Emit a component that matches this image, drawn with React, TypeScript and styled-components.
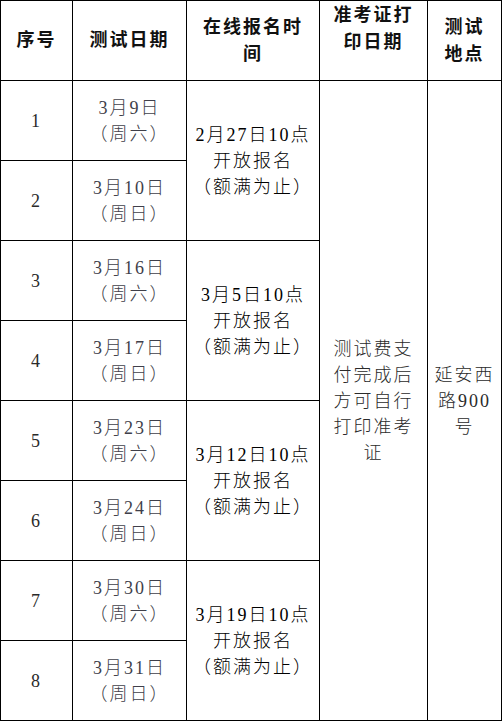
import styled, { createGlobalStyle } from 'styled-components';

const GlobalStyle = createGlobalStyle`
  html, body {
    margin: 0;
    padding: 0;
    background: #ffffff;
  }
`;

const Table = styled.table`
  border-collapse: collapse;
  table-layout: fixed;
  width: 501px;
  font-family: 'Liberation Serif', 'Noto Sans CJK SC', serif;
  font-size: 18px;
  letter-spacing: 2px;
  line-height: 26px;
  color: #222222;
`;

const Col = styled.col<{ $width: number }>`
  width: ${({ $width }) => $width}px;
`;

const HeaderCell = styled.th<{ $lift?: boolean }>`
  height: 80px;
  box-sizing: border-box;
  border: 1px solid #000000;
  padding: 0 4px ${({ $lift }) => ($lift ? '24px' : '0')};
  text-align: center;
  vertical-align: middle;
  font-weight: bold;
  line-height: 27px;
  color: #111111;
`;

const Cell = styled.td<{ $tone?: 'date' | 'dark' }>`
  height: 80px;
  box-sizing: border-box;
  border: 1px solid #000000;
  padding: 0 4px;
  text-align: center;
  vertical-align: middle;
  font-weight: 300;
  color: ${({ $tone }) =>
    $tone === 'date' ? '#3f3f4a' : $tone === 'dark' ? '#000000' : '#2a2a2a'};
`;

const rows = [
  { no: 1, day: '3月9日', week: '（周六）' },
  { no: 2, day: '3月10日', week: '（周日）' },
  { no: 3, day: '3月16日', week: '（周六）' },
  { no: 4, day: '3月17日', week: '（周日）' },
  { no: 5, day: '3月23日', week: '（周六）' },
  { no: 6, day: '3月24日', week: '（周日）' },
  { no: 7, day: '3月30日', week: '（周六）' },
  { no: 8, day: '3月31日', week: '（周日）' },
];

const signups = ['2月27日10点', '3月5日10点', '3月12日10点', '3月19日10点'];

export default function App() {
  return (
    <>
      <GlobalStyle />
      <Table>
        <colgroup>
          <Col $width={72} />
          <Col $width={114} />
          <Col $width={133} />
          <Col $width={108} />
          <Col $width={74} />
        </colgroup>
        <thead>
          <tr>
            <HeaderCell>序号</HeaderCell>
            <HeaderCell>测试日期</HeaderCell>
            <HeaderCell>
              在线报名时
              <br />间
            </HeaderCell>
            <HeaderCell $lift>
              准考证打
              <br />
              印日期
            </HeaderCell>
            <HeaderCell>
              测试
              <br />
              地点
            </HeaderCell>
          </tr>
        </thead>
        <tbody>
          {rows.map((row, i) => (
            <tr key={row.no}>
              <Cell>{row.no}</Cell>
              <Cell $tone='date'>
                {row.day}
                <br />
                {row.week}
              </Cell>
              {i % 2 === 0 && (
                <Cell rowSpan={2} $tone='dark'>
                  {signups[i / 2]}
                  <br />
                  开放报名
                  <br />
                  （额满为止）
                </Cell>
              )}
              {i === 0 && (
                <>
                  <Cell rowSpan={8}>
                    测试费支
                    <br />
                    付完成后
                    <br />
                    方可自行
                    <br />
                    打印准考
                    <br />证
                  </Cell>
                  <Cell rowSpan={8}>
                    延安西
                    <br />
                    路900
                    <br />号
                  </Cell>
                </>
              )}
            </tr>
          ))}
        </tbody>
      </Table>
    </>
  );
}
